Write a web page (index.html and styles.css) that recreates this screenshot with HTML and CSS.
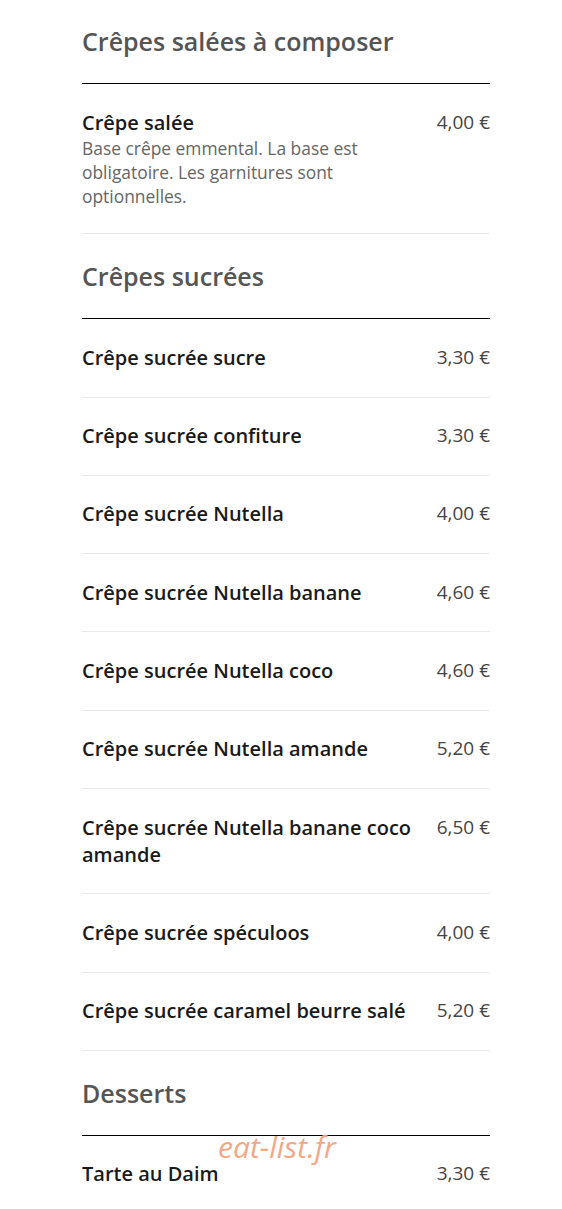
FILE: index.html
```html
<!DOCTYPE html>
<html lang="fr">
<head>
    <meta charset="UTF-8">
    <meta name="viewport" content="width=device-width, initial-scale=1.0">
    <title>Carte - Crêpes</title>
    <link rel="stylesheet" href="styles.css">
</head>
<body>
    <div class="menu">
        <section class="category">
            <h2>Crêpes salées à composer</h2>
            <div class="item">
                <div class="info">
                    <span class="name">Crêpe salée</span>
                    <p class="desc">Base crêpe emmental. La base est obligatoire. Les garnitures sont optionnelles.</p>
                </div>
                <span class="price">4,00 €</span>
            </div>
        </section>

        <section class="category">
            <h2>Crêpes sucrées</h2>
            <div class="item">
                <div class="info"><span class="name">Crêpe sucrée sucre</span></div>
                <span class="price">3,30 €</span>
            </div>
            <div class="item">
                <div class="info"><span class="name">Crêpe sucrée confiture</span></div>
                <span class="price">3,30 €</span>
            </div>
            <div class="item">
                <div class="info"><span class="name">Crêpe sucrée Nutella</span></div>
                <span class="price">4,00 €</span>
            </div>
            <div class="item">
                <div class="info"><span class="name">Crêpe sucrée Nutella banane</span></div>
                <span class="price">4,60 €</span>
            </div>
            <div class="item">
                <div class="info"><span class="name">Crêpe sucrée Nutella coco</span></div>
                <span class="price">4,60 €</span>
            </div>
            <div class="item">
                <div class="info"><span class="name">Crêpe sucrée Nutella amande</span></div>
                <span class="price">5,20 €</span>
            </div>
            <div class="item">
                <div class="info"><span class="name">Crêpe sucrée Nutella banane coco amande</span></div>
                <span class="price">6,50 €</span>
            </div>
            <div class="item">
                <div class="info"><span class="name">Crêpe sucrée spéculoos</span></div>
                <span class="price">4,00 €</span>
            </div>
            <div class="item">
                <div class="info"><span class="name">Crêpe sucrée caramel beurre salé</span></div>
                <span class="price">5,20 €</span>
            </div>
        </section>

        <section class="category">
            <h2>Desserts</h2>
            <div class="item">
                <div class="info"><span class="name">Tarte au Daim</span></div>
                <span class="price">3,30 €</span>
            </div>
        </section>

        <div class="watermark">eat-list.fr</div>
    </div>
</body>
</html>
```

FILE: styles.css
```css
body {
    margin: 0;
    background: #fff;
    font-family: "Open Sans", Arial, sans-serif;
    color: #1a1a1a;
}
.menu {
    position: relative;
    width: 408px;
    margin-left: 82px;
    padding-top: 25px;
}
.category h2 {
    margin: 0;
    font-size: 25px;
    font-weight: 600;
    line-height: 32px;
    color: #555;
    padding-bottom: 26px;
    border-bottom: 1px solid #000;
}
.category + .category h2 {
    padding-top: 26px;
}
.item {
    display: flex;
    justify-content: space-between;
    gap: 20px;
    padding: 24.6px 0 25.7px;
    border-bottom: 1px solid #e8e8e8;
}
.item .name {
    display: block;
    font-size: 20px;
    font-weight: 600;
    line-height: 27px;
    color: #1a1a1a;
}
.desc {
    margin: 0;
    font-size: 17.4px;
    line-height: 24px;
    color: #666;
}
.price {
    flex-shrink: 0;
    font-size: 19px;
    line-height: 27px;
    color: #444;
}
.watermark {
    position: absolute;
    left: 136px;
    bottom: 47px;
    font-size: 30px;
    font-style: italic;
    color: #f2a888;
    pointer-events: none;
}
```
